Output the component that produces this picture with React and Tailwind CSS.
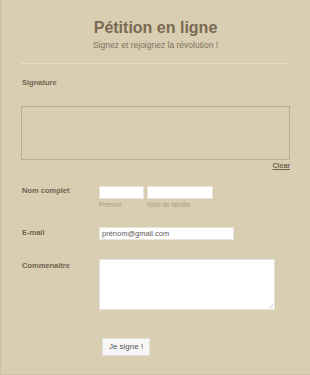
import React from 'react';

function Label({ children }) {
  return <div className="w-[77px] shrink-0 text-[7.5px] font-bold text-[#6f6450] leading-[10px]">{children}</div>;
}

export default function App() {
  return (
    <div className="w-[310px] h-[375px] bg-[#d9cdb2] border-l border-b border-[#cbbfa5] overflow-hidden" style={{ fontFamily: '"Liberation Sans", Arial, sans-serif' }}>
      <div className="pt-[18px] text-center">
        <h1 className="text-[16px] font-bold leading-[20px] text-[#786a50]">Pétition en ligne</h1>
        <p className="mt-[2px] text-[8.5px] leading-[11px] text-[#7c7260]">Signez et rejoignez la révolution !</p>
      </div>
      <div className="mx-[20px] mt-[12px] h-px bg-[#e6ddca]" />

      <div className="px-[20px]">
        <div className="mt-[14px] pl-[1px] text-[7.5px] font-bold text-[#6f6450] leading-[10px]">Signature</div>
        <div className="mt-[18px] h-[54px] border border-[#b7ad9b]" />
        <div className="flex justify-end mt-[1px]">
          <span className="text-[7px] font-bold underline text-[#6f6450] leading-[9px]">Clear</span>
        </div>
      </div>

      <div className="mt-[16px] pl-[21px] flex">
        <Label>Nom complet</Label>
        <div className="flex gap-[3px]">
          <div>
            <div className="w-[45px] h-[13px] bg-white border border-[#e8e4dc]" />
            <div className="mt-[2px] text-[6.5px] leading-[7px] text-[#a89b82]">Prénom</div>
          </div>
          <div>
            <div className="w-[66px] h-[13px] bg-white border border-[#e8e4dc]" />
            <div className="mt-[2px] text-[6.5px] leading-[7px] text-[#a89b82]">Nom de famille</div>
          </div>
        </div>
      </div>

      <div className="mt-[19px] pl-[21px] flex items-start">
        <div className="pt-[1px]"><Label>E-mail</Label></div>
        <div className="w-[135px] h-[13px] bg-white border border-[#e8e4dc] flex items-center pl-[2px] text-[7.5px] text-[#5a5a5a]">prénom@gmail.com</div>
      </div>

      <div className="mt-[19px] pl-[21px] flex items-start">
        <div className="pt-[2px]"><Label>Commenaitre</Label></div>
        <div className="relative w-[176px] h-[51px] bg-white border border-[#e5e2dc]">
          <svg className="absolute right-[1px] bottom-[1px]" width="5" height="5" viewBox="0 0 5 5">
            <path d="M1 5 L5 1 M3 5 L5 3" stroke="#aaa" strokeWidth="0.6" />
          </svg>
        </div>
      </div>

      <div className="mt-[22px] pl-[101px]">
        <button className="w-[48px] h-[18px] bg-[#f6f6f6] border border-[#e2e2e2] text-[8px] text-[#555555] rounded-[1px]">Je signe !</button>
      </div>
    </div>
  );
}
